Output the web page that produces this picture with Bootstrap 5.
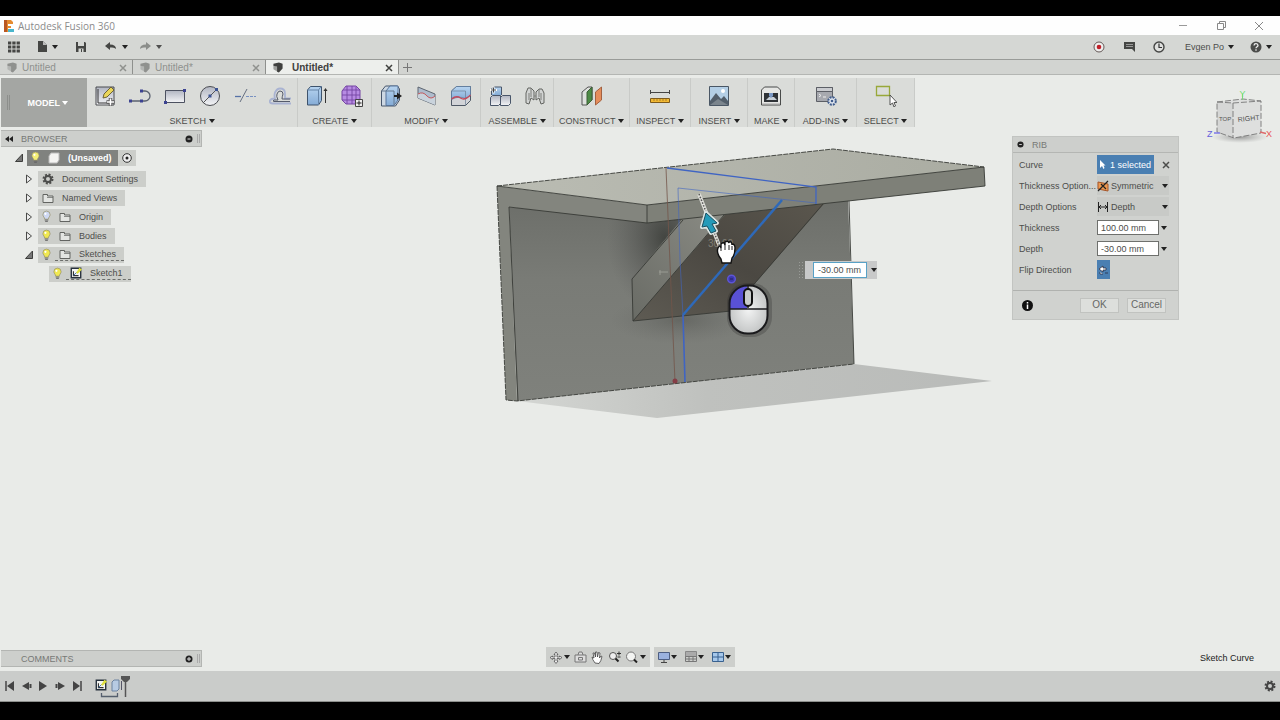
<!DOCTYPE html>
<html lang="en">
<head>
<meta charset="utf-8">
<meta name="viewport" content="width=device-width, initial-scale=1">
<title>Autodesk Fusion 360</title>
<link href="https://cdn.jsdelivr.net/npm/bootstrap@5.3.0/dist/css/bootstrap.min.css" rel="stylesheet">
<style>
  body{font-family:"Liberation Sans",Arial,sans-serif;font-size:9px;line-height:12px;color:#4c4d4b;background:#e9ebe8}
  button,select,input{font:inherit;color:inherit;background:none;border:0;padding:0}
  svg{display:block;flex:none}
  a{color:inherit;text-decoration:none}
  .black-top{height:16px;background:#000}
  .black-end{height:18px;background:#000}
  .titlebar{height:19px;background:#fefefe;color:#8b8b8b;font-family:"Open Sans","Liberation Sans",sans-serif;font-size:10px}
  .quickbar{height:25px;background:#d5d7d4;border-bottom:1px solid #999b98}
  .doc-tabs{height:15px;background:#d2d4d1;border-bottom:1px solid #b4b6b3;color:#8f918e;font-size:10px}
  .doc-tab{width:133px;height:14px;padding:1px 5px 0 6px;border-right:1px solid #8e908d}
  .doc-tab.active{background:#edefec;color:#3f403e;font-weight:bold}
  .stage{background:#e9ebe8;padding-top:3px}
  .ribbon{display:grid;grid-template-columns:86px 211px 74px 109px 73px 76px 61px 57px 47px 62px 58px;width:max-content;height:49px;margin-left:1px;background:#dadcd9}
  .workspace-btn{background:#a4a6a3;color:#fff;font-weight:bold}
  .grip{left:6px;top:17px;width:3px;height:15px;border:solid #8d8f8c;border-width:0 1px}
  .tools{border-right:1px solid #c9cbc8;padding-top:5px}
  .tools .tool{width:35px;height:26px;display:flex;align-items:center;justify-content:center}
  .tools .menu{height:12px;margin-top:6px;white-space:nowrap}
  .caret{display:inline-block;width:0;height:0;border:solid transparent;border-width:4px 3px 0;border-top-color:#222;vertical-align:1px}
  .workspace-btn .caret{border-top-color:#fff}
  .browser{margin-top:3px}
  .strip{width:201px;height:17px;margin-left:1px;background:#cdcfcc;border:solid #b3b5b2;border-width:1px 1px 1px 0;color:#777976}
  .tree{padding:1px 0 0 15px}
  .node{height:19px}
  .node.root{margin-bottom:2px}
  .chip{height:16px;background:#ccceca;white-space:nowrap}
  .chip.main{width:91px;background:#80827f;color:#fff;font-weight:bold}
  .d1{margin-left:10px}.d2{margin-left:34px}
  .d1 .chip{margin-left:5px}
  .stitched{border-bottom:1px dashed #6c6e6b}
  .model{left:calc(50% - 144px);top:69px;width:500px;height:280px}
  .value-box{left:301px;top:117px;width:80px;height:18px}
  .value-box .pane{width:72px;height:18px;background:#c8c9c9}
  .value-box input{width:54px;height:16px;background:#fff;border:1px solid #58a1c6;text-align:right;padding-right:5px}
  .cube{right:4px;top:13px}
  .rib{right:101px;top:61px;width:167px;background:#d0d2cf;border:1px solid #c2c4c1}
  .rib-head{height:16px;background:#cdcfcc;border-bottom:1px solid #b4b6b3;color:#777976}
  .rib-row{display:grid;grid-template-columns:78px 1fr;height:21px;align-items:center;padding-left:6px}
  .rib-body{padding:1px 0 10px}
  .picked{width:57px;height:19px;background:#4a7fb2;color:#fff}
  .combo{width:72px;height:19px;background:#c8cac7}
  .combo select{appearance:none;width:51px;height:18px;margin-left:2px}
  .field input{width:62px;height:15px;background:#fff;border:1px solid #6e706d;padding-left:3px}
  .field .caret{margin-left:2px}
  .flip{width:13px;height:19px;background:#4a7fb2}
  .rib-foot{height:29px;border-top:1px solid #b0b2af;padding:0 12px 0 9px}
  .rib-foot .act{width:39px;height:15px;background:#dddfdc;border:1px solid #c1c3c0;font-size:10px;color:#666865;line-height:12px}
  .bottom{display:grid;grid-template-columns:1fr auto 1fr;align-items:end;margin-bottom:4px}
  .nav-tools{height:20px;background:#cdcfcc}
  .nav-tools .caret{margin-left:1px}
  .hint{color:#222;margin-right:26px;margin-bottom:3px}
  .timeline{height:31px;background:#cacccA;border-bottom:1px solid #8d8f8c}
  .timeline .play{width:17px}
</style>
</head>
<body class="d-flex flex-column min-vh-100">
<svg width="0" height="0" class="position-absolute" aria-hidden="true">
  <defs>
    <linearGradient id="bl" x1="0" y1="0" x2="0" y2="1"><stop offset="0" stop-color="#b7d4f0"/><stop offset="1" stop-color="#85acd6"/></linearGradient>
    <linearGradient id="gr" x1="0" y1="0" x2="0" y2="1"><stop offset="0" stop-color="#b2b6c2"/><stop offset="1" stop-color="#f3f4f6"/></linearGradient>
    <symbol id="bulb" viewBox="0 0 10 14"><path d="M5 1a4 4 0 0 0-4 4c0 2 2 3 2 5h4c0-2 2-3 2-5a4 4 0 0 0-4-4z" fill="currentColor" stroke="#97916a" stroke-width=".8"/><path d="M3 11h4M3.500 12.500h3" stroke="#666"/><circle cx="3.800" cy="4" r="1.200" fill="#fff"/></symbol>
    <symbol id="folder" viewBox="0 0 12 12"><path d="M1 10.500v-8h4.500v1.500h5.500v6.500z" fill="#e3e5e2" stroke="#626461"/><path d="M5 5.500h6" stroke="#626461" stroke-width=".7"/></symbol>
    <symbol id="closed" viewBox="0 0 8 10"><path d="M1.500 1v8l5-4z" fill="#eee" stroke="#4a4b49"/></symbol>
    <symbol id="open" viewBox="0 0 8 10"><path d="M7.500 1v7.500h-7z" fill="#777" stroke="#3e3f3d"/></symbol>
    <symbol id="x" viewBox="0 0 8 8"><path d="M1 1l6 6M7 1l-6 6" stroke="currentColor" stroke-width="1.500"/></symbol>
    <symbol id="doc" viewBox="0 0 12 12"><path d="M1 2l6-1.500 4 1.500v5l-4 4.500-2-1V5L1 4z" fill="currentColor"/><path d="M1 3.500l4.500 1.500v5.500L1 8z" fill="currentColor" opacity=".45"/></symbol>
    <symbol id="sk" viewBox="0 0 14 14"><path d="M1.500 1.500h11v11h-11z" fill="#f4f5f3" stroke="#26303c" stroke-width="1.600"/><path d="M4 5v5h6" fill="none" stroke="#333" stroke-width="1.300"/><path d="M4 10l4-4" stroke="#2d65a5"/><path d="M7 7l4-6 3 2-5 5z" fill="#dfe03c"/></symbol>
    <symbol id="gear" viewBox="0 0 12 12"><circle cx="6" cy="6" r="4.500" fill="none" stroke="currentColor" stroke-width="2" stroke-dasharray="2 1.530"/><circle cx="6" cy="6" r="3" fill="none" stroke="currentColor" stroke-width="2"/></symbol>
    <symbol id="pin" viewBox="0 0 8 8"><circle cx="4" cy="4" r="3.500" fill="#222"/><path d="M2.500 4h3" stroke="#ddd"/></symbol>
  </defs>
</svg>

<div class="black-top"></div>
<header class="titlebar d-flex align-items-center ps-1">
  <svg width="10" height="12" viewBox="0 0 10 12"><path d="M0 0h7l2 2v2H4v2h3v2H4v4H0z" fill="#e58a2e"/><path d="M0 0h3v12H0z" fill="#b95722"/><path d="M4 9h6v3H4z" fill="#49b6cc"/></svg>
  <span class="ms-1">Autodesk Fusion 360</span>
  <div class="ms-auto d-flex align-items-center gap-4 pe-3">
    <button aria-label="Minimize" class="me-1"><svg width="10" height="10"><path d="M1 4.500h8" stroke="#999"/></svg></button>
    <button aria-label="Restore" class="me-1"><svg width="10" height="10"><path d="M1.500 2.500h6v6h-6zM3.500 2v-1.500h6v6h-1.500" fill="none" stroke="#888"/></svg></button>
    <button aria-label="Close"><svg width="10" height="10"><path d="M1 1l8 8M9 1l-8 8" stroke="#888"/></svg></button>
  </div>
</header>

<nav class="quickbar d-flex align-items-center px-2">
  <button aria-label="Data panel"><svg width="12" height="12"><path d="M0 2h12M0 6h12M0 10h12" stroke="#454644" stroke-width="3" stroke-dasharray="3.300 1"/></svg></button>
  <button aria-label="File" class="d-flex align-items-center gap-1 ms-3"><svg width="12" height="12"><path d="M2 0h5l4 4v7H2z" fill="#454644"/><path d="M7 0v4h4" fill="#bbb"/></svg><i class="caret"></i></button>
  <button aria-label="Save" class="ms-3"><svg width="14" height="12"><path d="M2 1h9l1 1v9H2z" fill="#454644"/><path d="M4 1h6v4H4zM4.500 7.500h5v3.500h-5z" fill="#d5d7d4"/><path d="M7.500 8v3" stroke="#454644"/></svg></button>
  <button aria-label="Undo" class="d-flex align-items-center gap-1 ms-3"><svg width="14" height="12"><path d="M1 5l5-4v2.500c4 0 6 1.500 6 4.500-1.500-1.500-3-1.500-6-1.500V9z" fill="#454644"/></svg><i class="caret"></i></button>
  <button aria-label="Redo" class="d-flex align-items-center gap-1 ms-2"><svg width="16" height="12"><path d="M15 5l-5-4v2.500c-4 0-6 1.500-6 4.500 1.500-1.500 3-1.500 6-1.500V9z" fill="#8b8d8a"/></svg><i class="caret opacity-75"></i></button>
  <div class="ms-auto d-flex align-items-center">
    <button aria-label="Record"><svg width="12" height="12"><circle cx="6" cy="6" r="5" fill="#eee" stroke="#665a58"/><circle cx="6" cy="6" r="2.300" fill="#c01f28"/></svg></button>
    <button aria-label="Comments" class="ms-3"><svg width="16" height="12"><path d="M3 1h11v10l-3-3H3z" fill="#454644"/><path d="M5 3.500h7M5 5.500h7" stroke="#999"/></svg></button>
    <button aria-label="Job status" class="ms-3"><svg width="12" height="12"><circle cx="6" cy="6" r="5" fill="#dfe0de" stroke="#454644" stroke-width="1.400"/><path d="M6 2.500v4h3" fill="none" stroke="#333" stroke-width="1.200"/></svg></button>
    <button class="d-flex align-items-center gap-1 ms-3 ps-1">Evgen Po <i class="caret"></i></button>
    <button aria-label="Help" class="d-flex align-items-center gap-1 ms-3"><svg width="12" height="12"><circle cx="6" cy="6" r="5.500" fill="#4b4c4a"/><path d="M4 4.500c.2-2.500 4-2.300 4 0 0 1.200-2 1.200-2 2.700M6 8.200v1.500" fill="none" stroke="#eee" stroke-width="1.300"/></svg><i class="caret"></i></button>
  </div>
</nav>

<div class="doc-tabs d-flex">
  <div class="doc-tab d-flex align-items-center"><svg width="12" height="11"><use href="#doc"/></svg><a href="#" class="ms-1">Untitled</a><button aria-label="Close tab" class="ms-auto"><svg width="8" height="8"><use href="#x"/></svg></button></div>
  <div class="doc-tab d-flex align-items-center"><svg width="12" height="11"><use href="#doc"/></svg><a href="#" class="ms-1">Untitled*</a><button aria-label="Close tab" class="ms-auto"><svg width="8" height="8"><use href="#x"/></svg></button></div>
  <div class="doc-tab active d-flex align-items-center"><svg width="12" height="11"><use href="#doc"/></svg><a href="#" class="ms-2">Untitled*</a><button aria-label="Close tab" class="ms-auto"><svg width="8" height="8"><use href="#x"/></svg></button></div>
  <button aria-label="New tab" class="ms-1"><svg width="9" height="9"><path d="M4.500 0v9M0 4.500h9" stroke="#777"/></svg></button>
</div>

<main class="stage flex-grow-1 position-relative d-flex flex-column">
  <div class="ribbon">
    <button class="workspace-btn position-relative"><span class="grip position-absolute"></span><span class="ps-2">MODEL</span> <i class="caret"></i></button>
    <section class="tools"><div class="d-flex justify-content-center">
      <button class="tool" aria-label="Create sketch"><svg width="22" height="22"><path d="M2 2h18v18H2z" fill="url(#gr)" stroke="#4a4c50"/><path d="M4 4v14h13" fill="none" stroke="#333"/><path d="M9 13l1-4 7-7 3 3-7 7z" fill="#ead65a" stroke="#6d6337"/><path d="M16.500 13v8M12.500 17h8" stroke="#555" stroke-width="3.500"/><path d="M16.500 13.500v7M13 17h7" stroke="#fff" stroke-width="1.600"/></svg></button>
      <button class="tool" aria-label="Line"><svg width="22" height="22"><path d="M2 16h14a5 5 0 0 0 0-10h-3" fill="none" stroke="#5b6270" stroke-width="1.300"/><path d="M0 14.500h3v3H0zM11 14.500h3v3h-3zM11 4.500h3v3h-3z" fill="#3c4391"/></svg></button>
      <button class="tool" aria-label="Rectangle"><svg width="22" height="22"><path d="M1.500 5.500h19v12h-19z" fill="url(#gr)" stroke="#4c5160"/><path d="M0 16h3v3H0zM19 4h3v3h-3z" fill="#3c4391"/></svg></button>
      <button class="tool" aria-label="Circle"><svg width="22" height="22"><circle cx="11" cy="11" r="9.500" fill="url(#gr)" stroke="#4b4d52"/><path d="M4 18L18 4" stroke="#555"/><path d="M16 3h3v3h-3zM9.500 9.500h3v3h-3z" fill="#3c5391"/></svg></button>
      <button class="tool" aria-label="Trim"><svg width="22" height="22"><path d="M1 11.500h6" stroke="#5672a7" stroke-width="1.300"/><path d="M6 17L13 4" stroke="#666f80"/><path d="M12 11.500h10" stroke="#7891c1" stroke-dasharray="3 1"/></svg></button>
      <button class="tool" aria-label="Offset"><svg width="22" height="22"><path d="M22 18.500H4Q0 18.500 1 15.500q1-2 5-2-1-3 0-6 2-4 5-4 5 0 5 5v5h6" fill="none" stroke="#a9b3d2" stroke-width="1.800"/><path d="M21 16.500H5q-2-.5 0-1.500h4q-2-4-1-6 1-3 3-3 3 0 3 3-1 3-1 5h8" fill="none" stroke="#555b6b"/></svg></button>
    </div><button class="menu d-block w-100">SKETCH <i class="caret"></i></button></section>
    <section class="tools"><div class="d-flex justify-content-center">
      <button class="tool" aria-label="Extrude"><svg width="22" height="22"><path d="M1.500 5l3-3.500h11v14l-3 4.500h-11z" fill="url(#bl)" stroke="#3e536c"/><path d="M1.500 5h11v15M12.500 5l3-4" fill="none" stroke="#6685a8"/><path d="M19.500 4v14" stroke="#333"/><path d="M17.500 6l2-3 2 3z" fill="#333"/></svg></button>
      <button class="tool" aria-label="Form"><svg width="22" height="22"><path d="M1 6l4-5h10l4 4v10l-4 4H5l-4-4z" fill="#b78be3" stroke="#7545a3"/><path d="M1 10h18M1 15h18M6 1v18M11 1v18M15 2v17M2 5h17" stroke="#7545a3" stroke-width=".9"/><path d="M14.500 14.500h7v7h-7z" fill="#eee" stroke="#444"/><path d="M18 15.500v5M15.500 18h5" stroke="#222"/></svg></button>
    </div><button class="menu d-block w-100">CREATE <i class="caret"></i></button></section>
    <section class="tools"><div class="d-flex justify-content-center">
      <button class="tool" aria-label="Press pull"><svg width="22" height="22"><path d="M1.500 6l4-5h12l2 3v11l-4 6h-14z" fill="#cdd8e3" stroke="#47566b"/><path d="M6 6l4-5h8v14l-4 5.500H6z" fill="url(#bl)" stroke="#58759a"/><path d="M1.500 6h12.500v14" fill="none" stroke="#65798e"/><path d="M14 11h4" stroke="#222" stroke-width="2"/><path d="M17 7.500l5 3.500-5 3.500z" fill="#222"/></svg></button>
      <button class="tool" aria-label="Split face"><svg width="22" height="22"><path d="M3 2l17 7v11L3 13z" fill="#aebccd" stroke="#5d6570"/><path d="M3 9q5-3 9 2 4 4 8 0v9L3 13z" fill="#c9d3dc"/><path d="M3 9q5-3 9 2 4 4 8 0" fill="none" stroke="#c4595c"/></svg></button>
      <button class="tool" aria-label="Split body"><svg width="22" height="22"><path d="M1.500 6l5-4.500h14v14l-5 5h-14z" fill="#d2d4d8" stroke="#4e5866"/><path d="M1.500 6l5-4.500h14v9l-5 3q-7-3-14 1z" fill="url(#bl)" stroke="#58759a" stroke-width=".7"/><path d="M1.500 6h14v14" fill="none" stroke="#6b7e95" stroke-width=".7"/><path d="M1.500 14q5-4 9-1 4 3 10-3" fill="none" stroke="#c4495c" stroke-width="1.300"/></svg></button>
    </div><button class="menu d-block w-100">MODIFY <i class="caret"></i></button></section>
    <section class="tools"><div class="d-flex justify-content-center">
      <button class="tool" aria-label="New component"><svg width="22" height="22"><path d="M2.500 10V4l2-2h8v8" fill="url(#bl)" stroke="#49566a"/><path d="M1.500 12.500l2-2h8v8l-2 2h-8zM11.500 12.500l2-2h8v8l-2 2h-8z" fill="url(#gr)" stroke="#49566a"/><path d="M1 5h7M4.500 1.500v7" stroke="#fff" stroke-width="2"/><path d="M2 5h5M4.500 2.500v5" stroke="#444"/></svg></button>
      <button class="tool" aria-label="Joint"><svg width="22" height="22"><path d="M2 8l2-5h3l3 3v9l-3-2-2 6-3-1zM20 8l-2-4h-3l-3 3v8l3-2 2 6 3-1z" fill="#d2d4d3" stroke="#626460"/><path d="M5 8v7M10 11h2M17 8v7M7 3v9M15 4v8" fill="none" stroke="#7c7e7b"/></svg></button>
    </div><button class="menu d-block w-100">ASSEMBLE <i class="caret"></i></button></section>
    <section class="tools"><div class="d-flex justify-content-center">
      <button class="tool" aria-label="Offset plane"><svg width="22" height="22"><path d="M1 7l6-5h4v13l-5 5H1z" fill="#dfe1de" stroke="#555"/><path d="M6 7l5-5v13l-5 5z" fill="#4d8a45" stroke="#3c5f37"/><path d="M14.500 7l6-5v13l-6 5z" fill="#e58d5b" stroke="#a36140"/></svg></button>
    </div><button class="menu d-block w-100">CONSTRUCT <i class="caret"></i></button></section>
    <section class="tools"><div class="d-flex justify-content-center">
      <button class="tool" aria-label="Measure"><svg width="22" height="22"><path d="M1.500 5v4M20.500 5v4M2 7.500h18" stroke="#444"/><path d="M1.500 13.500h19v4h-19z" fill="#f2b934" stroke="#7d5a1c"/><path d="M5 14v2M8 14v2M11 14v2M14 14v2M17 14v2" stroke="#8b6420" stroke-width=".7"/></svg></button>
    </div><button class="menu d-block w-100">INSPECT <i class="caret"></i></button></section>
    <section class="tools"><div class="d-flex justify-content-center">
      <button class="tool" aria-label="Decal"><svg width="22" height="22"><path d="M1.500 1.500h19v19h-19z" fill="#b4cfe6" stroke="#4a5765"/><path d="M2 16l6-8 5 6 3-3 4 5v4H2z" fill="#535f6b"/><path d="M2 20l8-6 10 6z" fill="#7b858d"/><circle cx="15" cy="6" r="2" fill="#fff"/></svg></button>
    </div><button class="menu d-block w-100">INSERT <i class="caret"></i></button></section>
    <section class="tools"><div class="d-flex justify-content-center">
      <button class="tool" aria-label="3D print"><svg width="22" height="22"><path d="M1.500 5l3-3h13l3 3v15h-19z" fill="#e5e6e4" stroke="#494b4a"/><path d="M4 8h14v9H4z" fill="#2f3337"/><path d="M6 15l3-3h5l3 3z" fill="#c8d0d8"/><path d="M9 8h4v3l-2 2-2-2z" fill="#7b98c4"/><path d="M2 19h18" stroke="#aaa"/></svg></button>
    </div><button class="menu d-block w-100">MAKE <i class="caret"></i></button></section>
    <section class="tools"><div class="d-flex justify-content-center">
      <button class="tool" aria-label="Scripts"><svg width="22" height="22"><path d="M1.500 2.500h16v14h-16z" fill="#a7a9af" stroke="#5c5f66"/><path d="M1.500 2.500h16v4h-16z" fill="#caccd0" stroke="#5c5f66"/><path d="M4 9l2 1.500-2 1.500M8 12h3" fill="none" stroke="#eee"/><circle cx="17" cy="16" r="3.800" fill="#e2e8f0" stroke="#405d8d" stroke-width="2" stroke-dasharray="2 1"/><circle cx="17" cy="16" r="1.300" fill="#405d8d"/></svg></button>
    </div><button class="menu d-block w-100">ADD-INS <i class="caret"></i></button></section>
    <section class="tools"><div class="d-flex justify-content-center">
      <button class="tool" aria-label="Select"><svg width="22" height="22"><path d="M1.500 1.500h13v9h-13z" fill="none" stroke="#98a83a" stroke-width="1.300"/><path d="M15 10v10l2.500-2 1.500 4 1.500-1-1.500-3.500h3z" fill="#fff" stroke="#444" stroke-width=".9"/></svg></button>
    </div><button class="menu d-block w-100">SELECT <i class="caret"></i></button></section>
  </div>

  <aside class="browser">
    <div class="strip d-flex align-items-center ps-1"><svg width="8" height="8"><path d="M4 1v6L0 4zM8 1v6L4 4z" fill="#222"/></svg><span class="ms-2">BROWSER</span><svg class="ms-auto" width="8" height="8"><use href="#pin"/></svg><svg class="ms-1" width="4" height="9"><path d="M.5 0v9M2.500 0v9" stroke="#aaa"/></svg></div>
    <div class="tree">
      <div class="node root d-flex align-items-center"><svg width="8" height="10"><use href="#open"/></svg><div class="chip main d-flex align-items-center ms-1 ps-1"><svg width="9" height="13" color="#f4ee76"><use href="#bulb"/></svg><svg class="ms-2" width="12" height="12"><path d="M1 4l2-3h8v7l-2 3H1z" fill="#f4f4f2" stroke="#bbb"/></svg><a href="#" class="ms-2">(Unsaved)</a></div><div class="chip px-1 d-flex align-items-center"><svg width="10" height="10"><circle cx="5" cy="5" r="4.300" fill="#eee" stroke="#333"/><circle cx="5" cy="5" r="1.500" fill="#222"/></svg></div></div>
      <div class="node d1 d-flex align-items-center"><svg width="8" height="10"><use href="#closed"/></svg><div class="chip d-flex align-items-center ps-1 pe-2"><svg width="12" height="12"><use href="#gear"/></svg><a href="#" class="ms-2">Document Settings</a></div></div>
      <div class="node d1 d-flex align-items-center"><svg width="8" height="10"><use href="#closed"/></svg><div class="chip d-flex align-items-center ps-1 pe-2"><svg width="12" height="12"><use href="#folder"/></svg><a href="#" class="ms-2">Named Views</a></div></div>
      <div class="node d1 d-flex align-items-center"><svg width="8" height="10"><use href="#closed"/></svg><div class="chip d-flex align-items-center ps-1 pe-2"><svg width="9" height="13" color="#cfd9f2"><use href="#bulb"/></svg><svg class="ms-2" width="12" height="12"><use href="#folder"/></svg><a href="#" class="ms-2">Origin</a></div></div>
      <div class="node d1 d-flex align-items-center"><svg width="8" height="10"><use href="#closed"/></svg><div class="chip d-flex align-items-center ps-1 pe-2"><svg width="9" height="13" color="#f0e850"><use href="#bulb"/></svg><svg class="ms-2" width="12" height="12"><use href="#folder"/></svg><a href="#" class="ms-2">Bodies</a></div></div>
      <div class="node d1 d-flex align-items-center"><svg width="8" height="10"><use href="#open"/></svg><div class="chip d-flex align-items-center ps-1"><svg width="9" height="13" color="#f0e850"><use href="#bulb"/></svg><div class="stitched d-flex align-items-center ms-1 ps-1 pe-2"><svg width="12" height="12"><use href="#folder"/></svg><a href="#" class="ms-2">Sketches</a></div></div></div>
      <div class="node d2 d-flex align-items-center"><div class="chip d-flex align-items-center ps-1"><svg width="9" height="13" color="#f0e850"><use href="#bulb"/></svg><div class="stitched d-flex align-items-center ms-1 ps-1 pe-2"><svg width="12" height="12"><use href="#sk"/></svg><a href="#" class="ms-2">Sketch1</a></div></div></div>
    </div>
  </aside>

  <div class="model position-absolute">
    <svg width="500" height="280" viewBox="496 144 500 280" role="img" aria-label="Bracket with rib preview">
      <defs>
        <linearGradient id="wall" x1="0" y1="0" x2="0" y2="1"><stop offset="0" stop-color="#6c6e69"/><stop offset=".4" stop-color="#797b76"/><stop offset="1" stop-color="#7f817c"/></linearGradient>
        <linearGradient id="top" x1="0" y1="0" x2="1" y2="0"><stop offset="0" stop-color="#babcb3"/><stop offset="1" stop-color="#aaaca2"/></linearGradient>
        <linearGradient id="floor" x1="0" y1="0" x2="1" y2="0"><stop offset="0" stop-color="#d4d6d3"/><stop offset=".4" stop-color="#bfc1be"/><stop offset="1" stop-color="#b9bbb9"/></linearGradient>
        <linearGradient id="ribs" x1="0" y1="1" x2="1" y2="0"><stop offset="0" stop-color="#5e5b53"/><stop offset=".5" stop-color="#4b4842"/><stop offset="1" stop-color="#5b574e"/></linearGradient>
        <linearGradient id="side" x1="0" y1="1" x2="1" y2="0"><stop offset="0" stop-color="#696b65"/><stop offset="1" stop-color="#8b8c85"/></linearGradient>
        <radialGradient id="dark"><stop offset="0" stop-color="#333531" stop-opacity=".75"/><stop offset="1" stop-color="#555" stop-opacity="0"/></radialGradient>
        <radialGradient id="white" cx=".5" cy=".5"><stop offset="0" stop-color="#f3f4f4"/><stop offset="1" stop-color="#c5c7c7"/></radialGradient>
        <clipPath id="wallclip"><path d="M509 207L647 223L849 201L854 364L517 401z"/></clipPath>
      </defs>
      <path d="M517 401L657 418L992 381L854 364z" fill="url(#floor)"/>
      <path d="M509 207L647 220L848 198L854 364L517 401z" fill="url(#wall)"/>
      <g clip-path="url(#wallclip)"><ellipse cx="665" cy="238" rx="58" ry="78" fill="url(#dark)"/><ellipse cx="680" cy="320" rx="70" ry="24" fill="url(#dark)" opacity=".4"/></g>
      <path d="M632 279L683 218L728 212L633 321z" fill="url(#side)"/>
      <path d="M633 321L728 211L827 200L823 205L731 311z" fill="url(#ribs)"/>
      <path d="M497 186L647 205V223L509 207L517 401L506 400z" fill="#83857e"/>
      <path d="M497 186L833 149L984 167L647 205z" fill="url(#top)"/>
      <path d="M647 205L984 167L985 186L647 223z" fill="#7e8078"/>
      <g fill="none" stroke="#383a35" stroke-width=".9">
        <path d="M497 186L647 205L984 167M647 205V223L985 186L984 167M509 207L647 223M509 207L518 401M849 201L854 364"/>
        <path d="M497 186L833 149L984 167M497 186L506 400L517 401L854 364" stroke-dasharray="5 1"/>
        <path d="M632 279L683 220M724 215L633 321L632 279M823 204L731 311L633 321"/>
      </g>
      <path d="M666 168L675 382" stroke="#73564a" stroke-width=".8"/><circle cx="675" cy="381" r="2.500" fill="#853d46"/>
      <g fill="none" stroke="#3f64c3"><path d="M667 168L816 187V204" stroke-width="1.300"/><path d="M678 188L816 203M678 188L680 260L683 316" stroke-width=".6"/><path d="M683 315L685 382" stroke-width="1.600"/><path d="M782 200L683 315" stroke="#2e69b9" stroke-width="2.500"/></g>
      <path d="M699 194L721 250" stroke="#e2e2dc" stroke-width="3.500"/><path d="M699 194L721 250" stroke="#555" stroke-width="1.500" stroke-dasharray="1.500 1.500"/>
      <path d="M706 213L717 223L712 224L716 231L711 233L707 226L702 227z" fill="#249bb9" stroke="#dce6e5" stroke-width="4" stroke-linejoin="round"/><path d="M706 213L717 223L712 224L716 231L711 233L707 226L702 227z" fill="#249bb9" stroke="#174f61"/>
      <text x="708" y="247" font-size="10" fill="#97948b" opacity=".7">30.00</text><path d="M659 272h9M660 270v5" stroke="#999b93"/>
      <path d="M718 248q2-4 3 0v-4q3-3 4 1v-3q3-2 4 1v-1q3-1 3 3v-1q3 0 3 4 0 7-3 10l-1 5h-9l-1-4q-5-6-3-11z" fill="#fff" stroke="#111" stroke-width="1.400"/><path d="M721 248v3M725 245v5M729 245v5M732 246v4" stroke="#222"/>
      <circle cx="731.500" cy="279" r="3.800" fill="#3d39ad" stroke="#5d55d4" stroke-width="1.500"/><path d="M730 279h3" stroke="#24205e"/>
      <rect x="727" y="283" width="45" height="54" rx="20" fill="#222" opacity=".25"/>
      <rect x="729.500" y="285.500" width="38" height="48" rx="18" fill="url(#white)"/>
      <path d="M747 286h-1q-14 0-16.500 14v9H747z" fill="#5951d5"/>
      <rect x="729.500" y="285.500" width="38" height="48" rx="18" fill="none" stroke="#1a1a1c" stroke-width="2"/><path d="M730 309h38M748 286v22" stroke="#1a1a1c" stroke-width="1.500"/><rect x="744" y="289" width="8" height="17" rx="4" fill="#c9cccb" stroke="#111" stroke-width="2"/>
    </svg>
    <div class="value-box position-absolute d-flex">
      <svg width="8" height="18"><path d="M2.500 1v17M5.500 1v17" stroke="#999b97" stroke-dasharray="1 2"/></svg>
      <div class="pane d-flex align-items-center ps-2"><input aria-label="Depth value" value="-30.00 mm"><i class="caret ms-1"></i></div>
    </div>
  </div>

  <svg class="cube position-absolute" width="72" height="62" viewBox="1204 88 72 62" role="img" aria-label="View cube">
    <defs><radialGradient id="cs"><stop offset="0" stop-color="#777" stop-opacity=".7"/><stop offset="1" stop-color="#999" stop-opacity="0"/></radialGradient></defs>
    <ellipse cx="1240" cy="137" rx="28" ry="6" fill="url(#cs)"/>
    <path d="M1217 102L1243 99L1261 101V133L1234 138L1217 132z" fill="#dedfde"/><path d="M1217 102L1233 103V138L1217 132z" fill="#d6d7d6"/><path d="M1217 102L1233 103L1261 101V133L1234 138L1217 132zM1217 102L1243 99L1261 101M1233 103V138" fill="none" stroke="#777" stroke-dasharray="6 2" stroke-width=".9"/>
    <path d="M1242.500 94v6" stroke="#79d779"/><path d="M1214 133h6" stroke="#7d79e8" stroke-width="1.500"/><path d="M1260 132l6 1.500" stroke="#dc6a6a" stroke-width="1.500"/>
    <g font-size="9"><text x="1239.500" y="97" fill="#75dc75">Y</text><text x="1207" y="137" fill="#6560dc">Z</text><text x="1266" y="137" fill="#ea5656">X</text></g>
    <text x="1238" y="122" font-size="7" fill="#555" transform="rotate(-6 1238 122)">RIGHT</text><text x="1219" y="121" font-size="6" fill="#555">TOP</text>
  </svg>

  <form class="rib position-absolute">
    <div class="rib-head d-flex align-items-center ps-1"><svg width="7" height="7" viewBox="0 0 8 8"><use href="#pin"/></svg><span class="ms-2">RIB</span></div>
    <div class="rib-body">
      <div class="rib-row"><label for="curve">Curve</label><div class="d-flex align-items-center"><button type="button" id="curve" class="picked d-flex align-items-center justify-content-center gap-1"><svg width="6" height="9"><path d="M0 0v8l2-2 1.500 3 1-1-1-2.500h2z" fill="#fff"/></svg>1 selected</button><button type="button" class="ms-2" aria-label="Clear"><svg width="8" height="8"><use href="#x"/></svg></button></div></div>
      <div class="rib-row"><label for="topt" class="text-nowrap">Thickness Option...</label><div class="combo d-flex align-items-center"><svg width="12" height="12"><path d="M1 2l10 2v7L1 9z" fill="#ee9a52" stroke="#a5562b"/><path d="M1 11L11 1M4 4l5 5" stroke="#222" stroke-width="1.200"/></svg><select id="topt"><option>Symmetric</option></select><i class="caret"></i></div></div>
      <div class="rib-row"><label for="dopt">Depth Options</label><div class="combo d-flex align-items-center"><svg width="12" height="12"><path d="M1.500 1v10M10.500 1v10M2 6h8M4 4L2 6l2 2M8 4l2 2-2 2" fill="none" stroke="#222"/></svg><select id="dopt"><option>Depth</option></select><i class="caret"></i></div></div>
      <div class="rib-row"><label for="thick">Thickness</label><div class="field d-flex align-items-center"><input id="thick" value="100.00 mm"><i class="caret"></i></div></div>
      <div class="rib-row"><label for="depth">Depth</label><div class="field d-flex align-items-center"><input id="depth" value="-30.00 mm"><i class="caret"></i></div></div>
      <div class="rib-row"><label for="flip">Flip Direction</label><button type="button" id="flip" class="flip"><svg width="13" height="12"><path d="M2 5l4-3v2h3v2H6v2zM3 8v2h3M8 9h3" fill="#fff" stroke="#223" stroke-width=".7"/></svg></button></div>
    </div>
    <div class="rib-foot d-flex align-items-center"><svg width="11" height="11"><circle cx="5.500" cy="5.500" r="5.500" fill="#111"/><path d="M5.500 2v1.500M5.500 4.500v4.500" stroke="#fff" stroke-width="1.500"/></svg><button type="button" class="act ms-auto">OK</button><button type="button" class="act ms-2">Cancel</button></div>
  </form>

  <div class="bottom mt-auto position-relative">
    <div class="strip d-flex align-items-center"><span class="ps-3 ms-1">COMMENTS</span><svg class="ms-auto" width="8" height="8"><circle cx="4" cy="4" r="3.500" fill="#222"/><path d="M2 4h4M4 2v4" stroke="#ddd"/></svg><svg class="ms-1" width="4" height="9"><path d="M.5 0v9M2.500 0v9" stroke="#aaa"/></svg></div>
    <div class="d-flex gap-1">
      <div class="nav-tools d-flex align-items-center gap-1 px-1">
        <button class="d-flex align-items-center" aria-label="Orbit"><svg width="13" height="13"><path d="M6 1l2 2.500H7V6h2.500V5L12 6.500 9.500 8.500V7.500H7V10h1l-2 2.500L4 10h1V7.500H2.500v1L0 6.500 2.500 5v1H5V3.500H4z" fill="#eee" stroke="#555" stroke-width=".8"/></svg><i class="caret"></i></button>
        <button aria-label="Look at"><svg width="13" height="12"><path d="M1 4h11v7H1zM4 4l1-3h3l1 3" fill="#ddd" stroke="#777"/><path d="M4.500 6.500h4v2.500h-4z" fill="none" stroke="#777"/></svg></button>
        <button aria-label="Pan"><svg width="13" height="13"><path d="M4 12q-3-4-3-6l2 1-1-5 1.500 0 1 4 0-5h1.500l.5 5 1-4.500 1.500.5-.5 5 1.500-2 1 .5q-1 5-3 7z" fill="#fff" stroke="#444" stroke-width=".8"/></svg></button>
        <button aria-label="Zoom"><svg width="13" height="12"><circle cx="5" cy="5" r="3.500" fill="#eee" stroke="#555"/><path d="M7.500 7.500l3 3" stroke="#222" stroke-width="2"/><path d="M9 2.500h4M11 .5v4M9.500 6h3" stroke="#333"/></svg></button>
        <button class="d-flex align-items-center" aria-label="Fit"><svg width="14" height="12"><circle cx="6" cy="5.500" r="4.500" fill="#f3f4f2" stroke="#777"/><path d="M9 8.500l3 3" stroke="#222" stroke-width="2"/></svg><i class="caret"></i></button>
      </div>
      <div class="nav-tools d-flex align-items-center gap-2 px-1">
        <button class="d-flex align-items-center" aria-label="Display"><svg width="12" height="12"><path d="M.5 1.500h11v7H.5z" fill="#9bb2df" stroke="#4d5e82"/><path d="M6 9v2M3 11.500h6" stroke="#444"/></svg><i class="caret"></i></button>
        <button class="d-flex align-items-center" aria-label="Grid"><svg width="12" height="12"><path d="M.5.5h11v5H.5z" fill="#aaa" stroke="#888"/><path d="M.5 5.500h11v5H.5zM4 6v5M8 6v5M0 8h12" fill="none" stroke="#777"/></svg><i class="caret"></i></button>
        <button class="d-flex align-items-center" aria-label="Viewports"><svg width="12" height="12"><path d="M.5 1.500h11v9H.5z" fill="#a6c8eb" stroke="#38618f"/><path d="M6 1v10M0 6h12" stroke="#38618f"/></svg><i class="caret"></i></button>
      </div>
    </div>
    <div class="hint text-end">Sketch Curve</div>
  </div>
</main>

<footer class="timeline d-flex align-items-center ps-1 pe-1">
  <button class="play" aria-label="To start"><svg width="12" height="10"><path d="M2 0v10" stroke="#444" stroke-width="1.500"/><path d="M10 0v10L3 5z" fill="#444"/></svg></button>
  <button class="play" aria-label="Step back"><svg width="12" height="10"><path d="M8 1v8L1 5z" fill="#444"/><path d="M9.500 3v4" stroke="#444" stroke-width="2"/></svg></button>
  <button class="play" aria-label="Play"><svg width="12" height="10"><path d="M1 0v10l8-5z" fill="#444"/></svg></button>
  <button class="play" aria-label="Step forward"><svg width="12" height="10"><path d="M3 1v8l7-4z" fill="#444"/><path d="M1.500 3v4" stroke="#444" stroke-width="2"/></svg></button>
  <button class="play" aria-label="To end"><svg width="12" height="10"><path d="M1 0v10l7-5z" fill="#444"/><path d="M9 0v10" stroke="#444" stroke-width="1.500"/></svg></button>
  <svg class="ms-1" width="38" height="24" viewBox="93 675 38 24" role="img" aria-label="Timeline features"><use href="#sk" x="95" y="680" width="12" height="12"/><path d="M112 683l2-2h5v9l-2 2h-5z" fill="#b7cbe3" stroke="#6d83a0"/><path d="M121.500 682v9" stroke="#556"/><path d="M101.500 694v3.500h16v-3.500" fill="none" stroke="#555f6d" stroke-width="1.300"/><path d="M121 677h9v3l-3 3h-3l-3-3z" fill="#555"/><path d="M125.500 682v16" stroke="#555" stroke-width="1.500"/></svg>
  <button class="ms-auto" aria-label="Settings"><svg width="12" height="12" color="#444"><use href="#gear"/></svg></button>
</footer>
<div class="black-end"></div>
<script src="https://cdn.jsdelivr.net/npm/bootstrap@5.3.0/dist/js/bootstrap.bundle.min.js"></script>
</body>
</html>
